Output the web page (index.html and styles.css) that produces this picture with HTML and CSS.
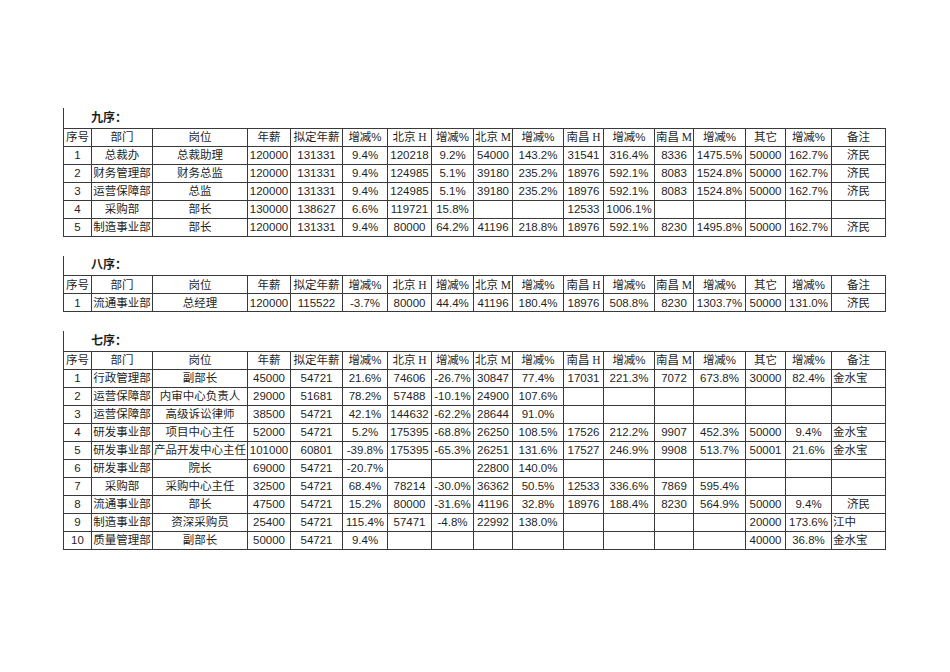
FILE: index.html
```html
<!DOCTYPE html>
<html lang="zh">
<head>
<meta charset="utf-8">
<title>薪酬表</title>
<link rel="stylesheet" href="styles.css">
</head>
<body>
<div class="page">

<table class="sheet">
<colgroup>
<col class="c1"><col class="c2"><col class="c3"><col class="c4"><col class="c5"><col class="c6"><col class="c7"><col class="c8"><col class="c9"><col class="c10"><col class="c11"><col class="c12"><col class="c13"><col class="c14"><col class="c15"><col class="c16"><col class="c17">
</colgroup>
<tr class="title"><td colspan="17">九序：</td></tr>
<tr><td>序号</td><td>部门</td><td>岗位</td><td>年薪</td><td>拟定年薪</td><td>增减%</td><td>北京<span class="lat"> H</span></td><td>增减%</td><td>北京<span class="lat"> M</span></td><td>增减%</td><td>南昌<span class="lat"> H</span></td><td>增减%</td><td>南昌<span class="lat"> M</span></td><td>增减%</td><td>其它</td><td>增减%</td><td>备注</td></tr>
<tr><td>1</td><td>总裁办</td><td>总裁助理</td><td>120000</td><td>131331</td><td>9.4%</td><td>120218</td><td>9.2%</td><td>54000</td><td>143.2%</td><td>31541</td><td>316.4%</td><td>8336</td><td>1475.5%</td><td>50000</td><td>162.7%</td><td>济民</td></tr>
<tr><td>2</td><td>财务管理部</td><td>财务总监</td><td>120000</td><td>131331</td><td>9.4%</td><td>124985</td><td>5.1%</td><td>39180</td><td>235.2%</td><td>18976</td><td>592.1%</td><td>8083</td><td>1524.8%</td><td>50000</td><td>162.7%</td><td>济民</td></tr>
<tr><td>3</td><td>运营保障部</td><td>总监</td><td>120000</td><td>131331</td><td>9.4%</td><td>124985</td><td>5.1%</td><td>39180</td><td>235.2%</td><td>18976</td><td>592.1%</td><td>8083</td><td>1524.8%</td><td>50000</td><td>162.7%</td><td>济民</td></tr>
<tr><td>4</td><td>采购部</td><td>部长</td><td>130000</td><td>138627</td><td>6.6%</td><td>119721</td><td>15.8%</td><td></td><td></td><td>12533</td><td>1006.1%</td><td></td><td></td><td></td><td></td><td></td></tr>
<tr><td>5</td><td>制造事业部</td><td>部长</td><td>120000</td><td>131331</td><td>9.4%</td><td>80000</td><td>64.2%</td><td>41196</td><td>218.8%</td><td>18976</td><td>592.1%</td><td>8230</td><td>1495.8%</td><td>50000</td><td>162.7%</td><td>济民</td></tr>
</table>

<table class="sheet">
<colgroup>
<col class="c1"><col class="c2"><col class="c3"><col class="c4"><col class="c5"><col class="c6"><col class="c7"><col class="c8"><col class="c9"><col class="c10"><col class="c11"><col class="c12"><col class="c13"><col class="c14"><col class="c15"><col class="c16"><col class="c17">
</colgroup>
<tr class="title"><td colspan="17">八序：</td></tr>
<tr><td>序号</td><td>部门</td><td>岗位</td><td>年薪</td><td>拟定年薪</td><td>增减%</td><td>北京<span class="lat"> H</span></td><td>增减%</td><td>北京<span class="lat"> M</span></td><td>增减%</td><td>南昌<span class="lat"> H</span></td><td>增减%</td><td>南昌<span class="lat"> M</span></td><td>增减%</td><td>其它</td><td>增减%</td><td>备注</td></tr>
<tr><td>1</td><td>流通事业部</td><td>总经理</td><td>120000</td><td>115522</td><td>-3.7%</td><td>80000</td><td>44.4%</td><td>41196</td><td>180.4%</td><td>18976</td><td>508.8%</td><td>8230</td><td>1303.7%</td><td>50000</td><td>131.0%</td><td>济民</td></tr>
</table>

<table class="sheet">
<colgroup>
<col class="c1"><col class="c2"><col class="c3"><col class="c4"><col class="c5"><col class="c6"><col class="c7"><col class="c8"><col class="c9"><col class="c10"><col class="c11"><col class="c12"><col class="c13"><col class="c14"><col class="c15"><col class="c16"><col class="c17">
</colgroup>
<tr class="title"><td colspan="17">七序：</td></tr>
<tr><td>序号</td><td>部门</td><td>岗位</td><td>年薪</td><td>拟定年薪</td><td>增减%</td><td>北京<span class="lat"> H</span></td><td>增减%</td><td>北京<span class="lat"> M</span></td><td>增减%</td><td>南昌<span class="lat"> H</span></td><td>增减%</td><td>南昌<span class="lat"> M</span></td><td>增减%</td><td>其它</td><td>增减%</td><td>备注</td></tr>
<tr><td>1</td><td>行政管理部</td><td>副部长</td><td>45000</td><td>54721</td><td>21.6%</td><td>74606</td><td>-26.7%</td><td>30847</td><td>77.4%</td><td>17031</td><td>221.3%</td><td>7072</td><td>673.8%</td><td>30000</td><td>82.4%</td><td class="left">金水宝</td></tr>
<tr><td>2</td><td>运营保障部</td><td>内审中心负责人</td><td>29000</td><td>51681</td><td>78.2%</td><td>57488</td><td>-10.1%</td><td>24900</td><td>107.6%</td><td></td><td></td><td></td><td></td><td></td><td></td><td></td></tr>
<tr><td>3</td><td>运营保障部</td><td>高级诉讼律师</td><td>38500</td><td>54721</td><td>42.1%</td><td>144632</td><td>-62.2%</td><td>28644</td><td>91.0%</td><td></td><td></td><td></td><td></td><td></td><td></td><td></td></tr>
<tr><td>4</td><td>研发事业部</td><td>项目中心主任</td><td>52000</td><td>54721</td><td>5.2%</td><td>175395</td><td>-68.8%</td><td>26250</td><td>108.5%</td><td>17526</td><td>212.2%</td><td>9907</td><td>452.3%</td><td>50000</td><td>9.4%</td><td class="left">金水宝</td></tr>
<tr><td>5</td><td>研发事业部</td><td>产品开发中心主任</td><td>101000</td><td>60801</td><td>-39.8%</td><td>175395</td><td>-65.3%</td><td>26251</td><td>131.6%</td><td>17527</td><td>246.9%</td><td>9908</td><td>513.7%</td><td>50001</td><td>21.6%</td><td class="left">金水宝</td></tr>
<tr><td>6</td><td>研发事业部</td><td>院长</td><td>69000</td><td>54721</td><td>-20.7%</td><td></td><td></td><td>22800</td><td>140.0%</td><td></td><td></td><td></td><td></td><td></td><td></td><td></td></tr>
<tr><td>7</td><td>采购部</td><td>采购中心主任</td><td>32500</td><td>54721</td><td>68.4%</td><td>78214</td><td>-30.0%</td><td>36362</td><td>50.5%</td><td>12533</td><td>336.6%</td><td>7869</td><td>595.4%</td><td></td><td></td><td></td></tr>
<tr><td>8</td><td>流通事业部</td><td>部长</td><td>47500</td><td>54721</td><td>15.2%</td><td>80000</td><td>-31.6%</td><td>41196</td><td>32.8%</td><td>18976</td><td>188.4%</td><td>8230</td><td>564.9%</td><td>50000</td><td>9.4%</td><td>济民</td></tr>
<tr><td>9</td><td>制造事业部</td><td>资深采购员</td><td>25400</td><td>54721</td><td>115.4%</td><td>57471</td><td>-4.8%</td><td>22992</td><td>138.0%</td><td></td><td></td><td></td><td></td><td>20000</td><td>173.6%</td><td class="left">江中</td></tr>
<tr><td>10</td><td>质量管理部</td><td>副部长</td><td>50000</td><td>54721</td><td>9.4%</td><td></td><td></td><td></td><td></td><td></td><td></td><td></td><td></td><td>40000</td><td>36.8%</td><td class="left">金水宝</td></tr>
</table>

</div>
</body>
</html>
```

FILE: styles.css
```css
html, body {
  margin: 0;
  padding: 0;
  background: #ffffff;
}

.page {
  padding: 108px 0 0 63px;
  display: flex;
  flex-direction: column;
  gap: 19px;
  font-family: "Liberation Sans", "Noto Sans CJK SC", sans-serif;
  font-size: 11.5px;
  color: #1f1f1f;
}

.sheet {
  border-collapse: collapse;
  table-layout: fixed;
  width: 822px;
}

.sheet td {
  height: 18px;
  padding: 0;
  border: 1px solid #3a3a3a;
  text-align: center;
  vertical-align: middle;
  white-space: nowrap;
  overflow: visible;
  line-height: 16px;
  box-sizing: border-box;
}

.sheet td.left {
  text-align: left;
  padding-left: 1px;
}

.sheet tr.title td {
  height: 20px;
  border-top: none;
  border-right: none;
  border-left: 1px solid #3a3a3a;
  text-align: left;
  padding-left: 27px;
  font-weight: bold;
  font-size: 12px;
}

.lat {
  font-family: "Liberation Serif", serif;
}

.c1 { width: 28px; }
.c2 { width: 61px; }
.c3 { width: 95px; }
.c4 { width: 43px; }
.c5 { width: 52px; }
.c6 { width: 45px; }
.c7 { width: 44px; }
.c8 { width: 42px; }
.c9 { width: 39px; }
.c10 { width: 51px; }
.c11 { width: 40px; }
.c12 { width: 51px; }
.c13 { width: 39px; }
.c14 { width: 52px; }
.c15 { width: 40px; }
.c16 { width: 46px; }
.c17 { width: 54px; }
```
